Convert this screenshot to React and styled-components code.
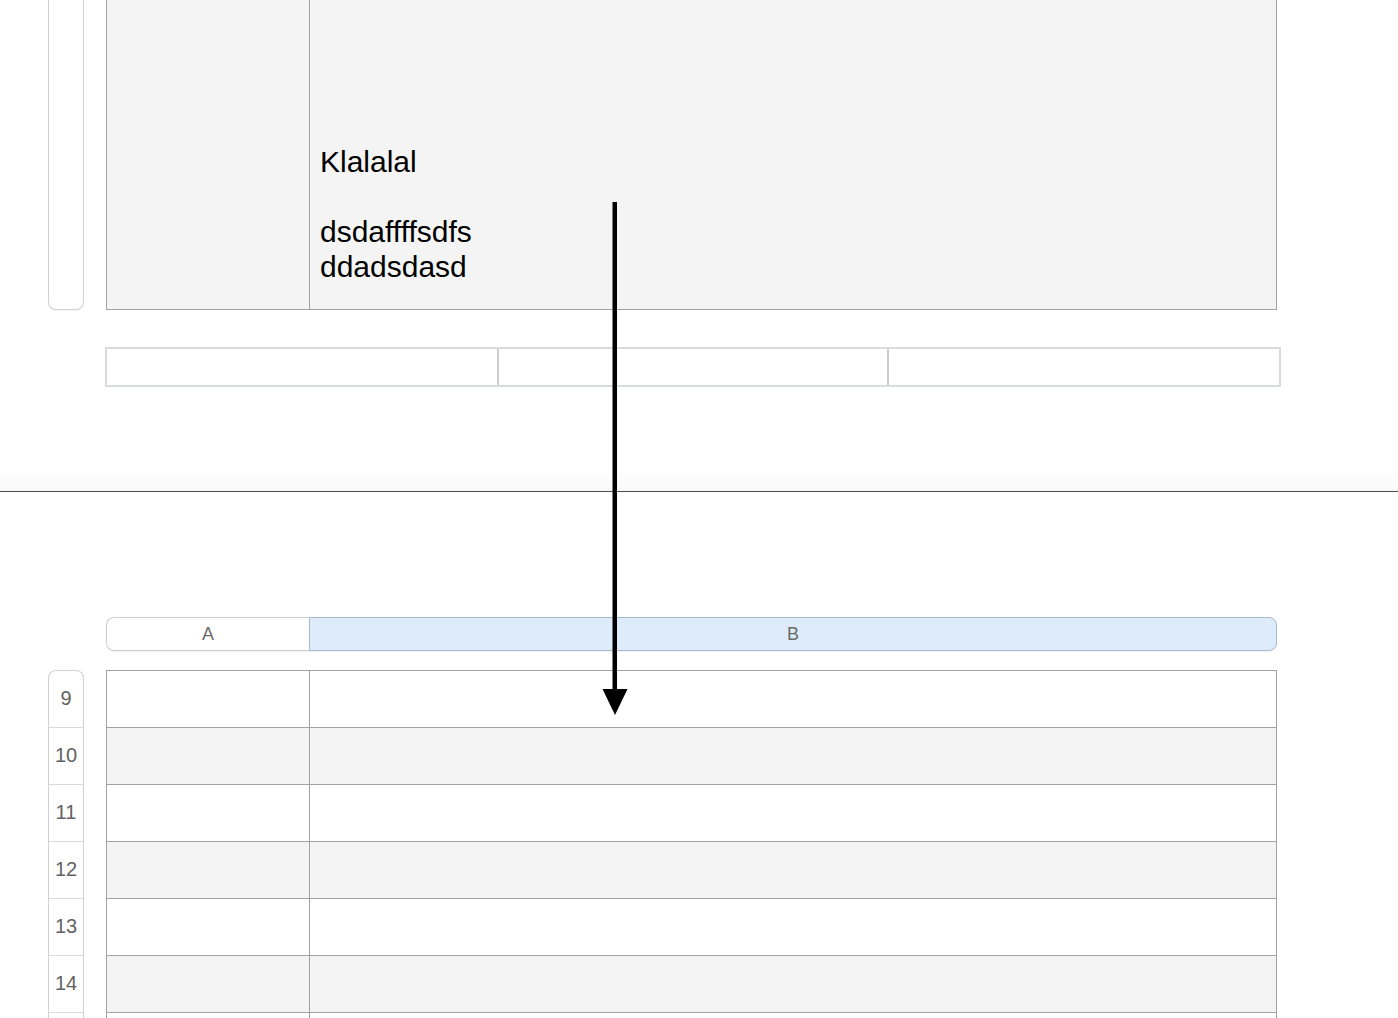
import styled, { createGlobalStyle } from "styled-components";

const GlobalStyle = createGlobalStyle`
  html, body {
    margin: 0;
    padding: 0;
    background: #ffffff;
    font-family: "Liberation Sans", Arial, sans-serif;
    overflow: hidden;
  }
`;

const Page = styled.div`
  position: relative;
  width: 1398px;
  height: 1018px;
  overflow: hidden;
  background: #fff;
`;

const TopPane = styled.div`
  height: 492px;
  border-bottom: 1px solid #4e4e4e;
  box-sizing: border-box;
  background: linear-gradient(to bottom, #fff 0, #fff 470px, #f9f9f9 490px);
`;

const SheetRow = styled.div`
  display: flex;
  gap: 22px;
  padding-left: 48px;
`;

const TopGutter = styled.div`
  width: 36px;
  height: 310px;
  box-sizing: border-box;
  border: 1px solid #d2d2d2;
  border-top: none;
  border-radius: 0 0 8px 8px;
  box-shadow: 0 1px 1px rgba(0, 0, 0, 0.05);
  background: #fff;
`;

const BigTable = styled.div`
  display: grid;
  grid-template-columns: 202px 967px;
  height: 310px;
  box-sizing: border-box;
  border: 1px solid #a2a2a2;
  border-top: none;
  background: #f4f4f4;
`;

const BigCell = styled.div`
  display: flex;
  flex-direction: column;
  justify-content: flex-end;
  padding: 0 0 25px 10px;
  border-left: ${(p) => (p.$first ? "none" : "1px solid #a2a2a2")};
  font-size: 30px;
  line-height: 35px;
  color: #000;
`;

const FooterRow = styled.div`
  display: grid;
  grid-template-columns: 390px 390px 392px;
  width: 1176px;
  height: 40px;
  margin: 37px 0 0 105px;
  box-sizing: border-box;
  border: 2px solid #d8dce0;
  background: #fff;
`;

const FooterCell = styled.div`
  border-left: ${(p) => (p.$first ? "none" : "2px solid #c9cdd1")};
`;

const BottomPane = styled.div`
  padding-top: 125px;
`;

const HeaderRow = styled.div`
  display: grid;
  grid-template-columns: 203px 968px;
  margin-left: 106px;
  height: 34px;
`;

const HeaderCell = styled.div`
  display: flex;
  align-items: center;
  justify-content: center;
  box-sizing: border-box;
  font-size: 18px;
  color: #6a6a6a;
  background: ${(p) => (p.$active ? "#deebfb" : "#fff")};
  border: 1px solid ${(p) => (p.$active ? "#a9bad0" : "#cfcfcf")};
  border-radius: ${(p) => (p.$active ? "0 8px 8px 0" : "8px 0 0 8px")};
  border-right: ${(p) => (p.$active ? "1px solid #a9bad0" : "none")};
  box-shadow: 0 1px 1px rgba(0, 0, 0, 0.06);
`;

const Body = styled.div`
  display: flex;
  gap: 22px;
  padding-left: 48px;
  margin-top: 19px;
`;

const RowNumbers = styled.div`
  width: 36px;
  box-sizing: border-box;
  border: 1px solid #d2d2d2;
  border-bottom: none;
  border-radius: 8px 8px 0 0;
  background: #fff;
`;

const RowNumber = styled.div`
  height: ${(p) => (p.$first ? "56px" : "57px")};
  box-sizing: border-box;
  border-top: ${(p) => (p.$first ? "none" : "1px solid #dadada")};
  display: flex;
  align-items: center;
  justify-content: center;
  font-size: 20px;
  color: #626262;
  padding-bottom: 2px;
`;

const Grid = styled.div`
  width: 1171px;
  border-left: 1px solid #a2a2a2;
  border-right: 1px solid #a2a2a2;
  box-sizing: border-box;
`;

const Row = styled.div`
  display: grid;
  grid-template-columns: 202px 967px;
  height: 57px;
  box-sizing: border-box;
  border-top: 1px solid #a2a2a2;
  background: ${(p) => (p.$shade ? "#f4f4f4" : "#fff")};
`;

const Cell = styled.div`
  border-left: ${(p) => (p.$first ? "none" : "1px solid #a2a2a2")};
`;

const Arrow = styled.svg`
  position: absolute;
  left: 602px;
  top: 202px;
`;

const rows = [9, 10, 11, 12, 13, 14, 15, 16];

export default function App() {
  return (
    <Page>
      <GlobalStyle />
      <TopPane>
        <SheetRow>
          <TopGutter />
          <BigTable>
            <BigCell $first />
            <BigCell>
              <div>Klalalal</div>
              <div>&nbsp;</div>
              <div>dsdaffffsdfs</div>
              <div>ddadsdasd</div>
            </BigCell>
          </BigTable>
        </SheetRow>
        <FooterRow>
          <FooterCell $first />
          <FooterCell />
          <FooterCell />
        </FooterRow>
      </TopPane>

      <BottomPane>
        <HeaderRow>
          <HeaderCell>A</HeaderCell>
          <HeaderCell $active>B</HeaderCell>
        </HeaderRow>
        <Body>
          <RowNumbers>
            {rows.map((n, i) => (
              <RowNumber key={n} $first={i === 0}>
                {n}
              </RowNumber>
            ))}
          </RowNumbers>
          <Grid>
            {rows.map((n, i) => (
              <Row key={n} $shade={i % 2 === 1}>
                <Cell $first />
                <Cell />
              </Row>
            ))}
          </Grid>
        </Body>
      </BottomPane>

      <Arrow width="26" height="514" viewBox="0 0 26 514">
        <rect x="10.5" y="0" width="4.5" height="490" fill="#000" />
        <polygon points="0.5,487 25.5,487 13,513" fill="#000" />
      </Arrow>
    </Page>
  );
}
